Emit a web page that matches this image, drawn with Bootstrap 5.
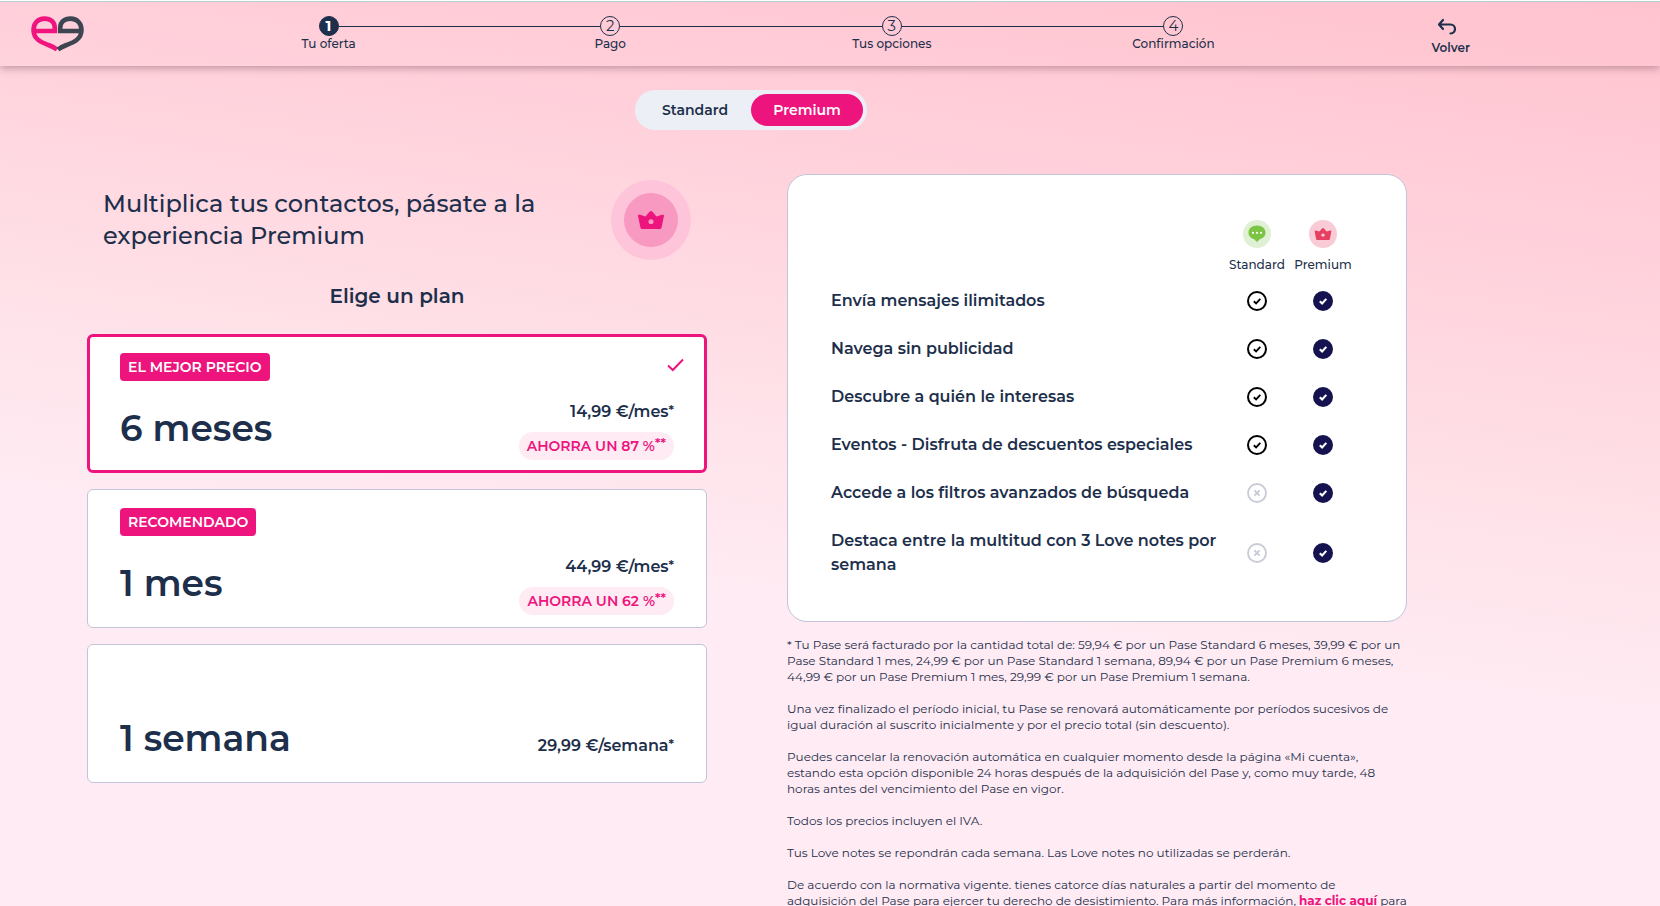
<!DOCTYPE html>
<html lang="es">
<head>
<meta charset="utf-8">
<meta name="viewport" content="width=device-width, initial-scale=1">
<title>Tu oferta</title>
<link href="https://cdn.jsdelivr.net/npm/bootstrap@5.3.0/dist/css/bootstrap.min.css" rel="stylesheet">
<style>
:root { --navy: #1d2f4b; --pink: #ee147d; --line: #c3c3d9; }
body {
  font-family: Montserrat, Inter, "Open Sans", sans-serif;
  color: var(--navy);
  background: #ffebf3 linear-gradient(188deg, #ffc3ce 0, #ffcfda 230px, #ffd5de 330px, #ffe2e9 530px, #ffebf3 712px) no-repeat;
}
.shell { max-width: 1502px; }
.topbar {
  border-top: 1px solid #fff;
  box-shadow: inset 0 1px 0 #b5cfd2, 0 2px 8px rgba(90, 50, 65, .4);
}
.topbar .shell { height: 65px; display: grid; grid-template-columns: 1fr 6fr 1fr; }
.brand { padding: 14px 0 0 30px; }
.steps { padding-top: 15px; font-size: 12px; line-height: 16px; font-weight: 500; }
.steps li { flex: 1; text-align: center; position: relative; }
.steps li + li::before {
  content: ""; position: absolute; top: 10px; right: calc(50% + 10px);
  width: calc(100% - 20px); border-top: 1px solid var(--navy);
}
.step-dot {
  display: flex; align-items: center; justify-content: center; width: 20px; height: 20px;
  margin: 0 auto; border: 1px solid var(--navy); border-radius: 50%; font-size: 15px; font-weight: 400;
}
.active .step-dot { background: var(--navy); color: #fff; font-weight: 700; }
.back-link { font-size: 12px; line-height: 16px; font-weight: 600; color: var(--navy); text-decoration: none; padding: 17px 32px 0 0; }
.switcher { background: #eceff5; border-radius: 20px; padding: 4px; width: 232px; }
.switcher .btn { flex: 1; height: 32px; padding: 0; border: 0; border-radius: 16px; font-size: 14px; font-weight: 600; color: var(--navy); }
.switcher .btn.active { background: var(--pink); color: #fff; }
.offer { display: grid; grid-template-columns: 1fr 1fr; gap: 80px; padding: 44px 95px 0 87px; }
.pitch { padding: 6px 16px 0; height: 86px; }
.pitch h1 { font-size: 24px; line-height: 32px; font-weight: 500; margin: 0; max-width: 460px; }
.choose { font-size: 20px; line-height: 24px; font-weight: 600; text-align: center; margin: 24px 0 26px; }
.plan {
  height: 139px; background: #fff; border: 1px solid var(--line); border-radius: 6px;
  padding: 18px 32px 12px; cursor: pointer; position: relative;
}
.plan:has(input:checked) { border: 3px solid var(--pink); padding: 16px 30px 10px; }
.plan .tick { position: absolute; right: 20px; top: 21px; }
.ribbon { background: var(--pink); color: #fff; font-size: 14px; line-height: 28px; font-weight: 600; border-radius: 4px; padding: 0 8px; }
.term { font-size: 36px; line-height: 40px; font-weight: 600; }
.term.raised { padding-bottom: 4px; }
.price { font-size: 16px; line-height: 24px; font-weight: 600; }
.saving { background: #feebf3; color: var(--pink); font-size: 14px; line-height: 28px; font-weight: 600; border-radius: 14px; padding: 0 8px; }
.star { font-size: 13px; line-height: 0; vertical-align: 2px; }
.saving .star { vertical-align: 3px; }
.compare { background: #fff; border: 1px solid var(--line); border-radius: 20px; padding: 45px 50px 32px 43px; }
.compare table { width: 100%; table-layout: fixed; border-collapse: collapse; }
.compare .mark-col { width: 66px; }
.compare thead th { font-size: 12px; line-height: 16px; font-weight: 500; text-align: center; padding: 0 0 4px; }
.compare thead svg { display: block; margin: 0 auto 9px; }
.compare tbody th { font-size: 16px; line-height: 24px; font-weight: 600; padding: 12px 0; }
.compare td { text-align: center; vertical-align: middle; padding: 0; }
.compare td svg { display: block; margin: 0 auto; }
.legal { font-size: 12px; line-height: 16px; padding-top: 15px; margin-right: -4px; }
.legal p { margin: 0 0 16px; }
.legal p:last-child { margin: 0; }
.legal a { color: var(--pink); font-weight: 700; }
</style>
</head>
<body>
<svg class="d-none" aria-hidden="true">
  <symbol id="crown" viewBox="0 0 26 20" preserveAspectRatio="none"><path d="M0 5.200 C0 4 1 3.800 2 4.300 L7.500 6 L11.500 .900 C12.500-.3 13.500-.3 14.500 .900 L18.500 6 L24 4.300 C25 3.800 26 4 26 5.200 L23.500 18.500 Q23.300 20 21.800 20 H4.200 Q2.700 20 2.500 18.500Z M13 9.300 a2.600 2.600 0 1 0 .01 0Z" fill="currentColor" fill-rule="evenodd"/></symbol>
  <symbol id="yes" viewBox="0 0 20 20"><circle cx="10" cy="10" r="9" fill="#fff" stroke="#000" stroke-width="2"/><path d="M6.800 10.300l2.300 2.200 4.200-4.600" fill="none" stroke="#000" stroke-width="1.900"/></symbol>
  <symbol id="plus" viewBox="0 0 20 20"><circle cx="10" cy="10" r="10" fill="#14134f"/><path d="M6.800 10.300l2.300 2.200 4.200-4.600" fill="none" stroke="#fff" stroke-width="2.100"/></symbol>
  <symbol id="no" viewBox="0 0 20 20"><circle cx="10" cy="10" r="9" fill="#fff" stroke="#c9cbd6" stroke-width="1.900"/><path d="M7.400 7.400l5.200 5.200m0-5.200l-5.200 5.200" stroke="#c9cbd6" stroke-width="2"/></symbol>
</svg>

<header class="topbar">
  <div class="shell">
    <a class="brand" href="#" aria-label="Inicio">
      <svg width="55" height="38" viewBox="0 0 55 38" fill="none" stroke-width="4.600" class="d-block">
        <path d="M3.500 16H27M24.800 18V13C24.800 7 20.500 3.600 14.500 3.600C7.500 3.600 3.500 8.700 3.500 15C3.500 24.500 12 27.500 18.500 30C22.500 31.500 25 33 27 34.500" stroke="#f0147e"/>
        <path d="M51.500 16H28M30.200 18V13C30.200 7 34.500 3.600 40.500 3.600C47.500 3.600 51.500 8.700 51.500 15C51.500 24.500 43 27.500 36.500 30C32.500 31.500 30 33 28 34.500" stroke="#3d4650"/>
      </svg>
    </a>
    <ol class="steps list-unstyled d-flex m-0">
      <li class="active"><span class="step-dot">1</span>Tu oferta</li>
      <li><span class="step-dot">2</span>Pago</li>
      <li><span class="step-dot">3</span>Tus opciones</li>
      <li><span class="step-dot">4</span>Confirmación</li>
    </ol>
    <a class="back-link d-flex flex-column align-items-end" href="#">
      <span class="d-flex flex-column align-items-center">
        <svg width="20" height="18" viewBox="0 0 20 18" class="mb-1 me-2" fill="none" stroke="currentColor" stroke-width="2.200" stroke-linecap="round" stroke-linejoin="round"><path d="M6 2L2 6.500L6 11M2.500 6.500H13.500C19.500 6.500 19.500 15.500 13.500 15.500"/></svg>
        Volver
      </span>
    </a>
  </div>
</header>

<main class="shell">
  <div class="switcher d-flex mx-auto mt-4" role="group" aria-label="Tipo de pase">
    <button type="button" class="btn">Standard</button>
    <button type="button" class="btn active" aria-pressed="true">Premium</button>
  </div>

  <div class="offer">
    <section>
      <div class="pitch d-flex justify-content-between align-items-center">
        <h1>Multiplica tus contactos, pásate a la experiencia Premium</h1>
        <svg width="80" height="80" viewBox="0 0 80 80" class="flex-shrink-0" aria-hidden="true"><circle cx="40" cy="40" r="40" fill="#fec4da"/><circle cx="40" cy="40" r="27" fill="#f899c2"/><use href="#crown" x="27" y="31" width="26" height="18" color="#ee147d"/></svg>
      </div>
      <h2 class="choose">Elige un plan</h2>
      <form class="d-flex flex-column gap-3">
        <label class="plan d-flex flex-column justify-content-between">
          <input class="visually-hidden" type="radio" name="plan" checked>
          <svg class="tick" width="17" height="14" viewBox="0 0 17 14" fill="none" stroke="#ee147d" stroke-width="2"><path d="M1 7.500l4.800 4.500L16 1.500"/></svg>
          <span><span class="ribbon d-inline-block">EL MEJOR PRECIO</span></span>
          <span class="d-flex justify-content-between align-items-center">
            <span class="term raised">6 meses</span>
            <span class="d-flex flex-column align-items-end gap-2"><span class="price">14,99 €/mes<span class="star">*</span></span><span class="saving">AHORRA UN 87 %<span class="star">**</span></span></span>
          </span>
        </label>
        <label class="plan d-flex flex-column justify-content-between">
          <input class="visually-hidden" type="radio" name="plan">
          <span><span class="ribbon d-inline-block">RECOMENDADO</span></span>
          <span class="d-flex justify-content-between align-items-center">
            <span class="term raised">1 mes</span>
            <span class="d-flex flex-column align-items-end gap-2"><span class="price">44,99 €/mes<span class="star">*</span></span><span class="saving">AHORRA UN 62 %<span class="star">**</span></span></span>
          </span>
        </label>
        <label class="plan d-flex flex-column justify-content-end">
          <input class="visually-hidden" type="radio" name="plan">
          <span class="d-flex justify-content-between align-items-baseline mb-2 pb-1">
            <span class="term">1 semana</span>
            <span class="price">29,99 €/semana<span class="star">*</span></span>
          </span>
        </label>
      </form>
    </section>

    <section>
      <div class="compare">
        <table>
          <colgroup><col><col class="mark-col"><col class="mark-col"></colgroup>
          <thead>
            <tr>
              <td></td>
              <th scope="col"><svg width="28" height="28" viewBox="0 0 28 28"><circle cx="14" cy="14" r="14" fill="#dff0d5"/><path d="M14 5.500c5 0 8.500 3 8.500 7c0 3.500-2.300 5.700-5.500 6.500l-3 3-3-3c-3.200-.8-5.500-3-5.500-6.500c0-4 3.500-7 8.500-7Z" fill="#7cc444"/><g fill="#fff"><circle cx="10" cy="12.800" r="1.100"/><circle cx="14" cy="12.800" r="1.100"/><circle cx="18" cy="12.800" r="1.100"/></g></svg>Standard</th>
              <th scope="col"><svg width="28" height="28" viewBox="0 0 28 28"><circle cx="14" cy="14" r="14" fill="#f8cbd6"/><use href="#crown" x="5.500" y="8" width="17" height="12" color="#e5405f"/></svg>Premium</th>
            </tr>
          </thead>
          <tbody>
            <tr><th scope="row">Envía mensajes ilimitados</th><td><svg width="20" height="20"><use href="#yes"/></svg></td><td><svg width="20" height="20"><use href="#plus"/></svg></td></tr>
            <tr><th scope="row">Navega sin publicidad</th><td><svg width="20" height="20"><use href="#yes"/></svg></td><td><svg width="20" height="20"><use href="#plus"/></svg></td></tr>
            <tr><th scope="row">Descubre a quién le interesas</th><td><svg width="20" height="20"><use href="#yes"/></svg></td><td><svg width="20" height="20"><use href="#plus"/></svg></td></tr>
            <tr><th scope="row">Eventos - Disfruta de descuentos especiales</th><td><svg width="20" height="20"><use href="#yes"/></svg></td><td><svg width="20" height="20"><use href="#plus"/></svg></td></tr>
            <tr><th scope="row">Accede a los filtros avanzados de búsqueda</th><td><svg width="20" height="20"><use href="#no"/></svg></td><td><svg width="20" height="20"><use href="#plus"/></svg></td></tr>
            <tr><th scope="row">Destaca entre la multitud con 3 Love notes por semana</th><td><svg width="20" height="20"><use href="#no"/></svg></td><td><svg width="20" height="20"><use href="#plus"/></svg></td></tr>
          </tbody>
        </table>
      </div>
      <div class="legal">
        <p>* Tu Pase será facturado por la cantidad total de: 59,94 € por un Pase Standard 6 meses, 39,99 € por un Pase Standard 1 mes, 24,99 € por un Pase Standard 1 semana, 89,94 € por un Pase Premium 6 meses, 44,99 € por un Pase Premium 1 mes, 29,99 € por un Pase Premium 1 semana.</p>
        <p>Una vez finalizado el período inicial, tu Pase se renovará automáticamente por períodos sucesivos de igual duración al suscrito inicialmente y por el precio total (sin descuento).</p>
        <p>Puedes cancelar la renovación automática en cualquier momento desde la página «Mi cuenta»,<br>estando esta opción disponible 24 horas después de la adquisición del Pase y, como muy tarde, 48 horas antes del vencimiento del Pase en vigor.</p>
        <p>Todos los precios incluyen el IVA.</p>
        <p>Tus Love notes se repondrán cada semana. Las Love notes no utilizadas se perderán.</p>
        <p>De acuerdo con la normativa vigente. tienes catorce días naturales a partir del momento de<br>adquisición del Pase para ejercer tu derecho de desistimiento. Para más información, <a href="#">haz clic aquí</a> para</p>
      </div>
    </section>
  </div>
</main>
<script src="https://cdn.jsdelivr.net/npm/bootstrap@5.3.0/dist/js/bootstrap.bundle.min.js"></script>
</body>
</html>
